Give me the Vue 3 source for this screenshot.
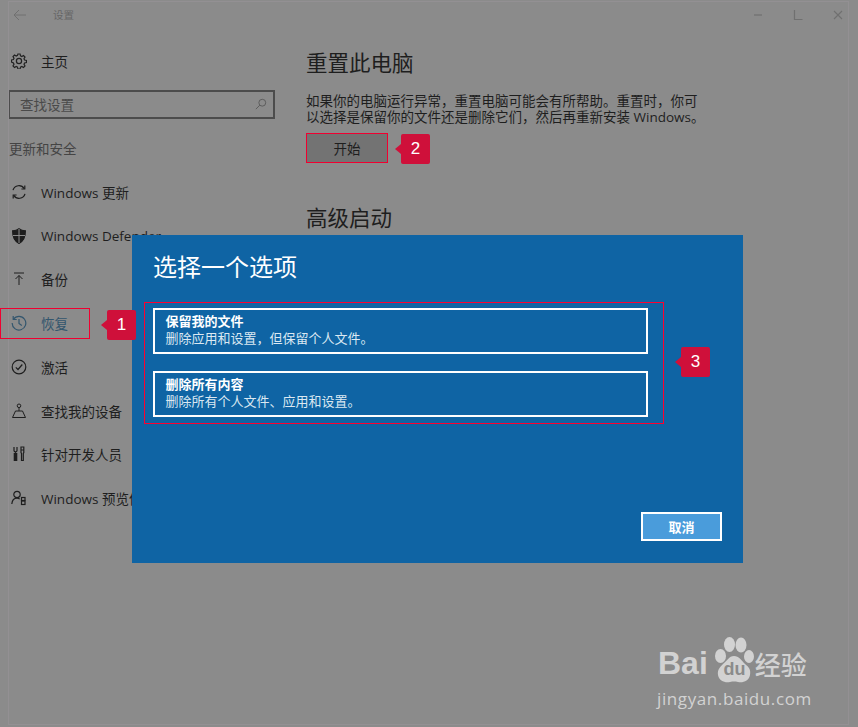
<script setup>
/**
 * Параметры Windows: восстановление + диалог выбора */
const navItems = [
  { name: 'Windows 更新', icon: 'sync' },
  { name: 'Windows Defender', icon: 'shield' },
  { name: '备份', icon: 'backup' },
  { name: '恢复', icon: 'history', active: true },
  { name: '激活', icon: 'check' },
  { name: '查找我的设备', icon: 'find' },
  { name: '针对开发人员', icon: 'dev' },
  { name: 'Windows 预览体验成员', icon: 'insider' }
]

const options = [
  { title: '保留我的文件', desc: '删除应用和设置，但保留个人文件。' },
  { title: '删除所有内容', desc: '删除所有个人文件、应用和设置。' }
]
</script>

<template>
  <div class="page">
    <div class="frame"></div>
    <header class="titlebar">
      <svg class="back" width="14" height="12" viewBox="0 0 14 12"><path d="M13 6H1.500M6 1 1 6l5 5" fill="none" stroke="#707070" stroke-width="1"/></svg>
      <span class="titlebar__name">设置</span>
      <div class="winbtns">
        <svg width="10" height="10" viewBox="0 0 10 10"><path d="M1 5h8" stroke="#707070" stroke-width="1.200"/></svg>
        <svg width="10" height="10" viewBox="0 0 10 10"><path d="M1.500 0v9.500H9.500" fill="none" stroke="#707070" stroke-width="1.200"/></svg>
        <svg width="10" height="10" viewBox="0 0 10 10"><path d="M1 1l8 8M9 1 1 9" stroke="#707070" stroke-width="1.100"/></svg>
      </div>
    </header>

    <div class="body">
      <aside class="sidebar">
        <div class="home">
          <svg class="icon" viewBox="0 0 16 16" fill="none" stroke="#222" stroke-width="1.200">
            <circle cx="8" cy="8" r="2.600"/>
            <path d="M6.900 1h2.200l.4 1.900 1.300.6 1.700-1 1.500 1.500-1 1.700.6 1.300 1.900.4v2.200l-1.900.4-.6 1.300 1 1.700-1.500 1.500-1.700-1-1.300.6-.4 1.900H6.900l-.4-1.900-1.300-.6-1.700 1-1.500-1.500 1-1.700-.6-1.300L.5 9.100V6.900l1.900-.4.6-1.300-1-1.700L3.500 2l1.700 1 1.300-.6z"/>
          </svg>
          <span>主页</span>
        </div>
        <div class="search">
          <span>查找设置</span>
          <svg width="12" height="12" viewBox="0 0 14 14" fill="none" stroke="#555" stroke-width="1"><circle cx="8.500" cy="5.500" r="4"/><path d="M5.600 8.400 1 13"/></svg>
        </div>
        <div class="group">更新和安全</div>
        <ul class="nav">
          <li v-for="item of navItems" :key="item.icon" class="nav__item" :class="{ _active: item.active }">
            <svg class="icon" viewBox="0 0 16 16" fill="none" stroke="currentColor" stroke-width="1.200">
              <template v-if="item.icon === 'sync'">
                <path d="M2 6.200A6.200 6.200 0 0 1 13.200 4.600M14 9.800A6.200 6.200 0 0 1 2.800 11.400"/>
                <path d="M13.800 1.600v3.400h-3.400M2.200 14.400v-3.400h3.400"/>
              </template>
              <template v-else-if="item.icon === 'shield'">
                <path d="M8 .8c1.800 1.400 4 2 6.400 2 0 5.500-1 10-6.400 12.600C2.600 12.800 1.600 8.300 1.600 2.800 4 2.800 6.200 2.200 8 .8z" fill="currentColor"/>
                <path d="M8 1v14M2 7.500h12" stroke="#8b8b8b" stroke-width="1"/>
              </template>
              <template v-else-if="item.icon === 'backup'">
                <path d="M3 2h10M8 14V4.500M4.500 8 8 4.500 11.500 8" stroke-width="1"/>
              </template>
              <template v-else-if="item.icon === 'history'">
                <path d="M2.500 4.200A6.800 6.800 0 1 1 1.200 8"/>
                <path d="M2.200 1v3.500h3.500M8 4v4.400l2.800 2"/>
              </template>
              <template v-else-if="item.icon === 'check'">
                <circle cx="8" cy="8" r="6.800"/>
                <path d="M4.800 8.300 7 10.500l4.300-5"/>
              </template>
              <template v-else-if="item.icon === 'find'">
                <circle cx="8" cy="2.800" r="1.800" stroke-width="1"/>
                <path d="M8 4.600V8M4.500 8h7L14.500 14.500h-13z" stroke-width="1"/>
              </template>
              <template v-else-if="item.icon === 'dev'">
                <path d="M3 1v3.500c0 .8.700 1.300 1.500 1.300S6 5.300 6 4.500V1M4.500 6v8.500M3.300 7v7.500h2.400V7"/>
                <path d="M10 1h2.800v5.500l-.5 1v7h-1.800v-7l-.5-1zM10 4h2.800"/>
              </template>
              <template v-else>
                <circle cx="6" cy="4.500" r="3.200"/>
                <path d="M.8 14c.4-3.500 2.400-5.800 5.200-5.800 1 0 2 .3 2.700.9"/>
                <rect x="10.500" y="7.500" width="3.500" height="3"/>
                <rect x="10.500" y="11" width="3.500" height="3.500"/>
              </template>
            </svg>
            <span>{{ item.name }}</span>
          </li>
        </ul>
      </aside>

      <main class="content">
        <h2>重置此电脑</h2>
        <p>如果你的电脑运行异常，重置电脑可能会有所帮助。重置时，你可<br>以选择是保留你的文件还是删除它们，然后再重新安装 Windows。</p>
        <button type="button" class="start">开始</button>
        <h2 class="second">高级启动</h2>
      </main>
    </div>

    <section class="dialog">
      <h1>选择一个选项</h1>
      <div class="dialog__options">
        <div v-for="opt of options" :key="opt.title" class="option">
          <strong>{{ opt.title }}</strong>
          <span>{{ opt.desc }}</span>
        </div>
      </div>
      <div class="dialog__footer">
        <button type="button" class="cancel">取消</button>
      </div>
    </section>

    <div class="mark mark--recover"></div>
    <div class="callout callout--1">1</div>
    <div class="callout callout--2">2</div>
    <div class="callout callout--3">3</div>

    <div class="watermark">
      <div class="watermark__logo">
        <span class="bai">Bai</span>
        <svg class="paw" viewBox="0 0 40 46">
          <g fill="#d2d2d2">
            <ellipse cx="6.500" cy="19" rx="5.500" ry="7"/>
            <ellipse cx="15.500" cy="7.500" rx="5.500" ry="7.500"/>
            <ellipse cx="27" cy="8" rx="5.500" ry="7.500"/>
            <ellipse cx="35" cy="19.500" rx="5" ry="6.500"/>
            <path d="M20 19c5 0 7 4 11 8 4 3 6 6 5 11-1 6-7 8-12 7-3-.6-5-.6-8 0-5 1-11-1-12-7-.8-5 2-8 5-11 4-3 6-8 11-8z"/>
          </g>
          <text x="20.500" y="38" text-anchor="middle" class="paw__du">du</text>
        </svg>
        <span class="jy">经验</span>
      </div>
      <div class="watermark__url">jingyan.baidu.com</div>
    </div>
  </div>
</template>

<style>
html, body {
  margin: 0;
  background: #8c8c8c;
}
</style>

<style scoped>
.page {
  position: relative;
  width: 858px;
  height: 727px;
  overflow: hidden;
  background: #8b8b8b;
  font-family: "Open Sans", "Noto Sans CJK SC", sans-serif;
  font-size: 13.5px;
  color: #1e1e1e;
}
.frame {
  position: absolute;
  inset: 1px 9px 2px 8px;
  border: 1px solid #939093;
  pointer-events: none;
}
.titlebar {
  display: flex;
  align-items: center;
  height: 29px;
  padding: 0 15px 0 13px;
}
.titlebar__name {
  margin-left: 26px;
  font-size: 10.5px;
  color: #666;
}
.winbtns {
  margin-left: auto;
  display: flex;
  gap: 30px;
}
.body {
  display: flex;
}
.sidebar {
  width: 290px;
  flex: none;
}
.icon {
  width: 16px;
  height: 16px;
  flex: none;
}
.home {
  display: flex;
  align-items: center;
  gap: 14px;
  height: 20px;
  margin: 22px 0 19px;
  padding-left: 11px;
}
.search {
  display: flex;
  align-items: center;
  justify-content: space-between;
  box-sizing: border-box;
  width: 267px;
  height: 29px;
  margin: 0 0 0 8px;
  padding: 0 6px 2px 10px;
  border: 2px solid #4c4c4c;
  color: #4a4a4a;
}
.group {
  margin: 20px 0 0 9px;
  height: 20px;
  line-height: 20px;
  color: #444;
}
.nav {
  list-style: none;
  margin: 11px 0 0;
  padding: 0;
}
.nav__item {
  display: flex;
  align-items: center;
  gap: 14px;
  height: 43.75px;
  padding-left: 11px;
  white-space: nowrap;
}
.nav__item._active {
  color: #33566e;
}
.content {
  padding-left: 16px;
}
h2 {
  margin: 19px 0 0;
  font-size: 21.5px;
  font-weight: 400;
  line-height: 30px;
}
p {
  margin: 15px 0 0;
  line-height: 16px;
  white-space: nowrap;
}
.start {
  display: block;
  box-sizing: border-box;
  width: 82px;
  height: 30px;
  margin-top: 8px;
  border: 1px solid #f00030;
  background: #737373;
  font: inherit;
  color: #1e1e1e;
}
.second {
  margin-top: 40px;
}
.dialog {
  position: absolute;
  left: 132px;
  top: 235px;
  box-sizing: border-box;
  width: 611px;
  height: 328px;
  padding: 15px 21px 22px 21px;
  display: flex;
  flex-direction: column;
  background: #0f64a4;
  color: #fff;
}
.dialog h1 {
  margin: 0;
  font-size: 24px;
  font-weight: 400;
  line-height: 34px;
}
.dialog__options {
  box-sizing: border-box;
  flex: none;
  width: 520px;
  height: 122px;
  margin: 18px 0 0 -9px;
  padding: 5px 0 0 8px;
  border: 1px solid #ff0030;
  display: flex;
  flex-direction: column;
  gap: 17px;
}
.option {
  box-sizing: border-box;
  flex: none;
  width: 495px;
  height: 46px;
  padding: 3px 10.500px;
  border: 2.5px solid #fff;
  display: flex;
  flex-direction: column;
  font-size: 13px;
  line-height: 17px;
}
.option strong {
  font-weight: 700;
}
.option span {
  color: #dbe8f2;
}
.dialog__footer {
  margin-top: auto;
  display: flex;
  justify-content: flex-end;
}
.cancel {
  box-sizing: border-box;
  width: 81px;
  height: 29px;
  border: 2.5px solid #fff;
  background: #4a9cdb;
  color: #fff;
  font: inherit;
  font-size: 13px;
  font-weight: 700;
}
.mark--recover {
  position: absolute;
  left: 0;
  top: 308px;
  width: 90px;
  height: 31px;
  box-sizing: border-box;
  border: 1px solid #f00030;
}
.callout {
  position: absolute;
  width: 29px;
  height: 30px;
  border-radius: 2px;
  background: #cf103a;
  color: #fff;
  font-family: "Liberation Sans", sans-serif;
  font-size: 17px;
  line-height: 30px;
  text-align: center;
}
.callout::before {
  content: "";
  position: absolute;
  left: -6px;
  top: 10px;
  border-style: solid;
  border-width: 5px 6px 5px 0;
  border-color: transparent #cf103a transparent transparent;
}
.callout--1 { left: 107px; top: 310px; }
.callout--2 { left: 401px; top: 134px; }
.callout--3 { left: 681px; top: 347px; }
.watermark {
  position: absolute;
  left: 657px;
  top: 637px;
  color: #d2d2d2;
}
.watermark__logo {
  display: flex;
  align-items: flex-end;
  height: 46px;
}
.bai {
  font-family: "Liberation Sans", sans-serif;
  font-weight: 700;
  font-size: 32px;
  line-height: 40px;
  margin-left: 1px;
}
.paw {
  width: 40px;
  height: 46px;
  margin-left: 6px;
}
.paw__du {
  font-family: "Liberation Sans", sans-serif;
  font-size: 18px;
  font-weight: 700;
  fill: #8b8b8b;
}
.jy {
  font-size: 26px;
  line-height: 36px;
  margin-left: 1px;
  font-weight: 500;
}
.watermark__url {
  margin-top: 5px;
  font-family: "Open Sans", sans-serif;
  font-size: 17px;
  letter-spacing: 0.6px;
  line-height: 22px;
}
</style>
